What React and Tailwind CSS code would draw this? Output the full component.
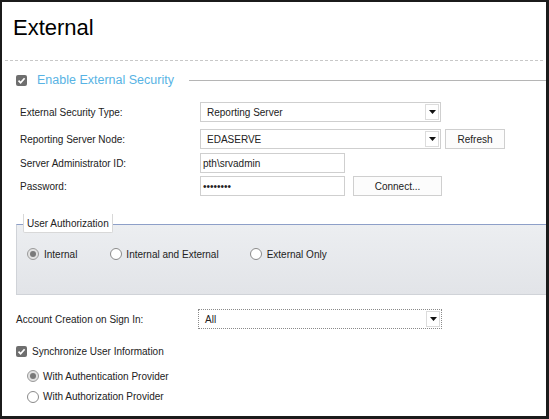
const Checkbox = () => (
  <span className="flex h-[11px] w-[11px] shrink-0 items-center justify-center rounded-[2px] bg-[#6e6e6e]">
    <svg width="9" height="9" viewBox="0 0 9 9">
      <path d="M1.5 4.6 L3.6 6.7 L7.6 2.2" fill="none" stroke="#fff" strokeWidth="1.7" />
    </svg>
  </span>
);

const Radio = ({ checked }) => (
  <span
    className={
      checked
        ? "flex h-[12px] w-[12px] shrink-0 items-center justify-center rounded-full border border-[#9a9a9a] bg-[#e2e2e2]"
        : "flex h-[12px] w-[12px] shrink-0 items-center justify-center rounded-full border border-[#8a8a8a] bg-white"
    }
  >
    {checked && <span className="h-[6px] w-[6px] rounded-full bg-[#7a7a7a]" />}
  </span>
);

const Arrow = () => (
  <svg width="7" height="4" viewBox="0 0 7 4">
    <path d="M0 0 H7 L3.5 4 Z" fill="#111" />
  </svg>
);

const Select = ({ value, dotted }) => (
  <div
    className={
      dotted
        ? "flex h-[20px] w-[244px] items-center border border-dotted border-[#8a8a8a] bg-white"
        : "flex h-[20px] w-[241px] items-center border border-[#cfcfcf] bg-white"
    }
  >
    <span className="flex-1 pl-[6px] text-[10px] text-[#222]">{value}</span>
    <span className="mr-px flex h-[16px] w-[14px] items-center justify-center border border-[#dcdcdc] bg-white">
      <Arrow />
    </span>
  </div>
);

const Input = ({ value }) => (
  <div className="flex h-[20px] w-[145px] items-center border border-[#cfcfcf] bg-white pl-[2px] text-[10px] text-[#222]">
    {value}
  </div>
);

const Button = ({ children, w }) => (
  <div
    className={`flex h-[20px] items-center justify-center border border-[#cfcfcf] bg-[#fcfcfc] text-[10px] text-[#222] ${w}`}
  >
    {children}
  </div>
);

const Row = ({ label, children, className }) => (
  <div className={`flex h-[20px] items-center ${className}`}>
    <span className="w-[198px] shrink-0 pl-[18px] text-[10px] text-[#222]">{label}</span>
    <div className="flex items-center">{children}</div>
  </div>
);

export default function App() {
  return (
    <div
      className="h-[419px] w-[549px] overflow-hidden border-t-2 border-r-[3px] border-b-[3px] border-l-2 border-[#1b1b1b] bg-white"
      style={{ fontFamily: '"Liberation Sans", Arial, sans-serif' }}
    >
      <div className="h-[58px] pl-[11px] pt-[15px]">
        <h1 className="text-[22px] leading-[22px] text-black">External</h1>
      </div>
      <div className="mx-[3px] border-t border-dashed border-[#c8c8c8]" />

      <div className="mt-[7px] flex h-[24px] items-center pl-[14px]">
        <Checkbox />
        <span className="ml-[10px] text-[12.5px] text-[#58b3e4]">Enable External Security</span>
        <span className="ml-[15px] h-px flex-1 bg-[#b5b5b5]" />
      </div>

      <Row label="External Security Type:" className="mt-[10px]">
        <Select value="Reporting Server" />
      </Row>
      <Row label="Reporting Server Node:" className="mt-[7px]">
        <Select value="EDASERVE" />
        <div className="ml-[4px]">
          <Button w="w-[60px]">Refresh</Button>
        </div>
      </Row>
      <Row label="Server Administrator ID:" className="mt-[4px]">
        <Input value="pth\srvadmin" />
      </Row>
      <Row label="Password:" className="mt-[3px]">
        <Input value="••••••••" />
        <div className="ml-[8px]">
          <Button w="w-[89px]">Connect...</Button>
        </div>
      </Row>

      <div className="relative ml-[14px] mt-[28px]">
        <div className="h-[71px] border-t border-l border-b border-t-[#8d9fc8] border-l-[#d0d3d8] border-b-[#d0d3d8] bg-[linear-gradient(#eceef1,#e2e4e8)]">
          <div className="flex h-[58px] items-center text-[10px] text-[#222]">
            <div className="ml-[10px] flex items-center gap-[5px]">
              <Radio checked />
              <span>Internal</span>
            </div>
            <div className="ml-[33px] flex items-center gap-[4px]">
              <Radio />
              <span>Internal and External</span>
            </div>
            <div className="ml-[31px] flex items-center gap-[5px]">
              <Radio />
              <span>External Only</span>
            </div>
          </div>
        </div>
        <div className="absolute left-[7px] top-[-10px] flex h-[19px] items-center rounded-b-[2px] border-x border-b border-[#d8d8d8] bg-white px-[3px] text-[10px] text-[#222]">
          User Authorization
        </div>
      </div>

      <div className="mt-[14px] flex h-[20px] items-center">
        <span className="w-[196px] shrink-0 pl-[14px] text-[10px] text-[#222]">Account Creation on Sign In:</span>
        <Select value="All" dotted />
      </div>

      <div className="mt-[12px] flex h-[20px] items-center pl-[14px] text-[10px] text-[#222]">
        <Checkbox />
        <span className="ml-[5px]">Synchronize User Information</span>
      </div>
      <div className="mt-[5px] flex h-[20px] items-center gap-[4px] pl-[25px] text-[10px] text-[#222]">
        <Radio checked />
        <span>With Authentication Provider</span>
      </div>
      <div className="mt-[0.5px] flex h-[20px] items-center gap-[4px] pl-[25px] text-[10px] text-[#222]">
        <Radio />
        <span>With Authorization Provider</span>
      </div>
    </div>
  );
}
